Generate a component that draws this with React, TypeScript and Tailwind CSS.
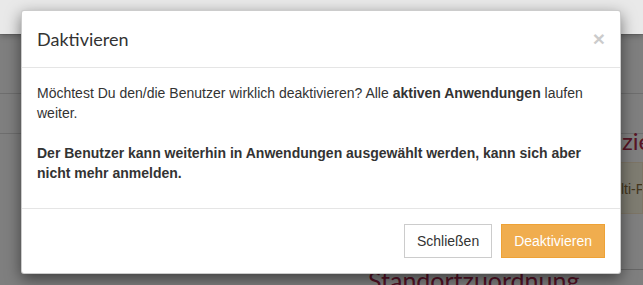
export default function App() {
  return (
    <div className="relative w-[643px] h-[285px] overflow-hidden bg-white font-['Liberation_Sans',Arial,sans-serif]">
      {/* page behind the dialog */}
      <div className="h-[35px] bg-[#f8f8f8] border-b border-[#e7e7e7]" />
      <div className="h-[59px] border-b border-[#ddd]" />
      <div className="h-[40px] border-b border-[#ddd]" />
      <div className="flex flex-col items-end">
        <div className="w-[21px] overflow-hidden whitespace-nowrap text-[24px] leading-[30px] text-[#b02a4a] font-['Lato',sans-serif] mt-[-8px]">
          zie
        </div>
        <div className="mt-[6px] w-[23px] h-[52px] overflow-hidden whitespace-nowrap bg-[#fcf8e3] border border-[#faebcc] text-[14px] text-[#8a6d3b] pt-[16px]">
          lti-F
        </div>
      </div>
      <div className="flex items-start pl-[368px] mt-[51px]">
        <span className="text-[25px] leading-[31px] whitespace-nowrap text-[#a8224a] font-['Lato',sans-serif]">
          Standortzuordnung
        </span>
        <div className="flex-1 ml-[12px] mt-[4px] border-b border-[#ccc]" />
      </div>

      {/* backdrop */}
      <div className="absolute inset-0 top-[34px] bg-black/50" />
      <div className="absolute inset-x-0 top-0 h-[34px] bg-black/[0.06] shadow-[0_2px_6px_rgba(0,0,0,0.25)]" />

      {/* modal */}
      <div className="absolute left-[21px] top-[10px] w-[600px] bg-white border border-black/20 rounded-[3px] shadow-[0_5px_15px_rgba(0,0,0,0.5)] text-[#333]">
        <div className="flex items-start justify-between p-[15px] border-b border-[#e5e5e5]">
          <h4 className="text-[18px] leading-[26px] font-['Lato',sans-serif] text-[#333]">Daktivieren</h4>
          <button className="text-[21px] leading-[21px] font-bold text-black opacity-20 mt-[2px]">×</button>
        </div>
        <div className="p-[15px] text-[14px] leading-[20px]">
          <p className="mb-[10px]">
            Möchtest Du den/die Benutzer wirklich deaktivieren? Alle <b>aktiven Anwendungen</b> laufen weiter.
            <br />
            <br />
            <b>Der Benutzer kann weiterhin in Anwendungen ausgewählt werden, kann sich aber nicht mehr anmelden.</b>
          </p>
        </div>
        <div className="flex justify-end gap-[9px] p-[15px] border-t border-[#e5e5e5]">
          <button className="px-[12px] py-[6px] text-[14px] leading-[20px] bg-white border border-[#ccc] text-[#333]">
            Schließen
          </button>
          <button className="px-[12px] py-[6px] text-[14px] leading-[20px] bg-[#f0ad4e] border border-[#eea236] text-white">
            Deaktivieren
          </button>
        </div>
      </div>
    </div>
  );
}
